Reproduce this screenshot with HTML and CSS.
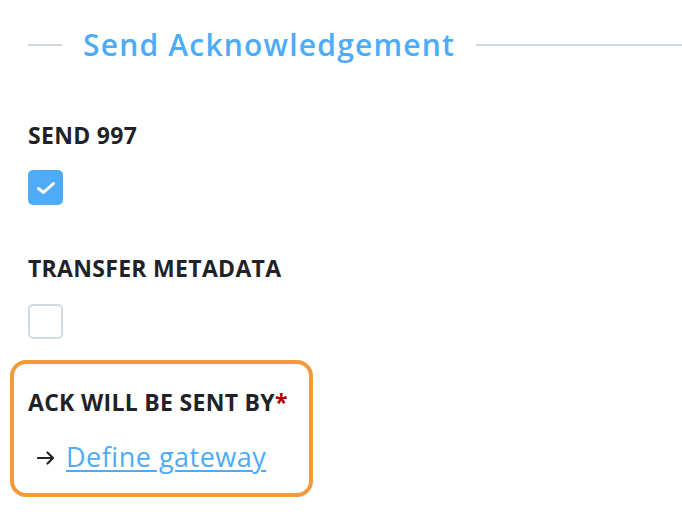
FILE: index.html
```html
<!DOCTYPE html>
<html>
<head>
<meta charset="utf-8">
<link rel="stylesheet" href="styles.css">
</head>
<body>
<div class="page">
  <div class="legend">
    <span class="rule rule-left"></span>
    <h2 class="legend-title">Send Acknowledgement</h2>
    <span class="rule rule-right"></span>
  </div>

  <div class="field field-first">
    <div class="label">SEND 997</div>
    <span class="checkbox checked">
      <svg width="20" height="16" viewBox="0 0 20 16"><path d="M2.5 8.5 L7.5 12.5 L17.5 3.5" fill="none" stroke="#fff" stroke-width="3" stroke-linecap="round" stroke-linejoin="round"/></svg>
    </span>
  </div>

  <div class="field field-second">
    <div class="label">TRANSFER METADATA</div>
    <span class="checkbox"></span>
  </div>

  <div class="highlight">
    <div class="label">ACK WILL BE SENT BY<span class="req">*</span></div>
    <div class="link-row">
      <svg class="arrow" width="18" height="14" viewBox="0 0 18 14"><path d="M1 7 H16 M10.5 1.5 L16 7 L10.5 12.5" fill="none" stroke="#1f2327" stroke-width="2.2" stroke-linecap="round" stroke-linejoin="round"/></svg>
      <a class="link" href="#">Define gateway</a>
    </div>
  </div>
</div>
</body>
</html>
```

FILE: styles.css
```css
html, body {
  margin: 0;
  padding: 0;
  background: #ffffff;
}
body {
  font-family: "Open Sans", "Noto Sans", sans-serif;
  color: #1f2327;
}
.page {
  padding: 26px 0 0 28px;
}
.legend {
  display: flex;
  align-items: center;
  height: 38px;
}
.rule {
  height: 2px;
  background: #d0d8de;
}
.rule-left {
  width: 34px;
}
.rule-right {
  flex: 1;
}
.legend-title {
  margin: 0 21px 0 21px;
  font-size: 30px;
  line-height: 38px;
  font-weight: 600;
  letter-spacing: 1.2px;
  color: #4dabf7;
  white-space: nowrap;
}
.field {
  display: flex;
  flex-direction: column;
  align-items: flex-start;
}
.field-first {
  margin-top: 56px;
}
.field-second {
  margin-top: 48px;
}
.label {
  font-size: 23px;
  line-height: 30px;
  font-weight: 700;
  letter-spacing: 0.3px;
  color: #1f2327;
}
.checkbox {
  box-sizing: border-box;
  width: 35px;
  height: 35px;
  border-radius: 5px;
  border: 2.5px solid #d3dce3;
  background: #fff;
  display: flex;
  align-items: center;
  justify-content: center;
}
.field-first .checkbox {
  margin-top: 20px;
}
.field-second .checkbox {
  margin-top: 21px;
}
.checkbox.checked {
  background: #4dabf7;
  border-color: #4dabf7;
}
.highlight {
  box-sizing: border-box;
  margin: 21px 0 0 -18px;
  width: 303px;
  height: 137px;
  border: 4px solid #f19a3b;
  border-radius: 16px;
  padding: 23px 0 0 14px;
}
.req {
  color: #b00000;
}
.link-row {
  display: flex;
  align-items: center;
  margin-top: 22px;
  padding-left: 9px;
  height: 36px;
}
.arrow {
  margin-right: 11px;
  margin-top: 2px;
}
.link {
  font-size: 27px;
  line-height: 36px;
  letter-spacing: 0.5px;
  color: #4dabf7;
  text-decoration: underline;
  text-underline-offset: 3px;
  text-decoration-thickness: 2px;
}
```
